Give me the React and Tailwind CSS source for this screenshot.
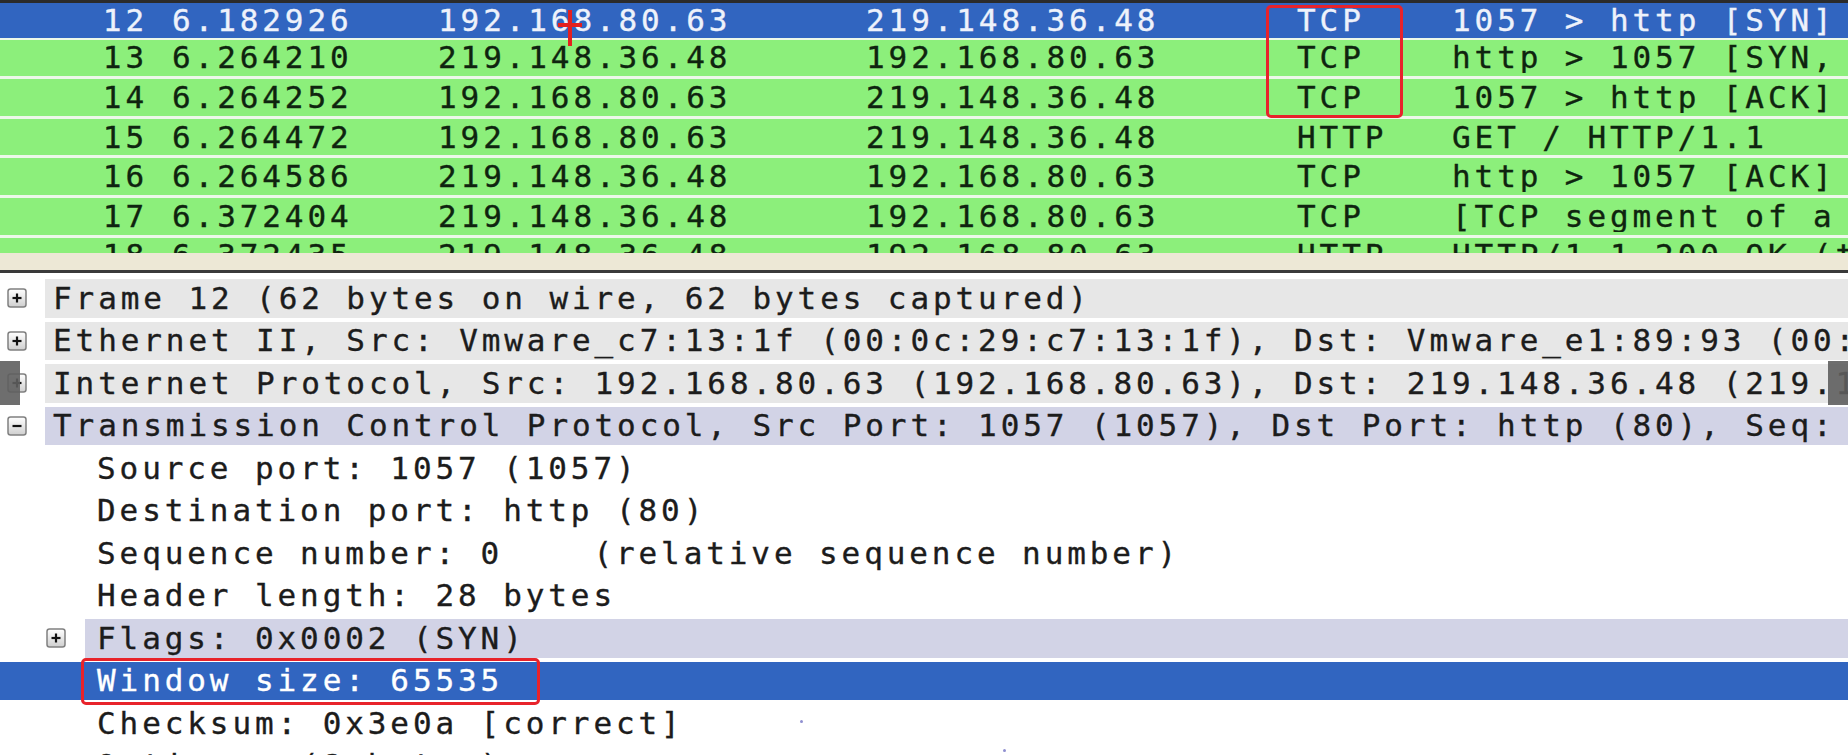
import React from "react";

const packets = [
  { no: "12", time: "6.182926", src: "192.168.80.63", dst: "219.148.36.48", proto: "TCP", info: "1057 > http [SYN] Seq=0 Win=65535 Len=0 MSS=1460", sel: true },
  { no: "13", time: "6.264210", src: "219.148.36.48", dst: "192.168.80.63", proto: "TCP", info: "http > 1057 [SYN, ACK] Seq=0 Ack=1 Win=5840 Len=0" },
  { no: "14", time: "6.264252", src: "192.168.80.63", dst: "219.148.36.48", proto: "TCP", info: "1057 > http [ACK] Seq=1 Ack=1 Win=65535 Len=0" },
  { no: "15", time: "6.264472", src: "192.168.80.63", dst: "219.148.36.48", proto: "HTTP", info: "GET / HTTP/1.1" },
  { no: "16", time: "6.264586", src: "219.148.36.48", dst: "192.168.80.63", proto: "TCP", info: "http > 1057 [ACK] Seq=1 Ack=489 Win=6432 Len=0" },
  { no: "17", time: "6.372404", src: "219.148.36.48", dst: "192.168.80.63", proto: "TCP", info: "[TCP segment of a reassembled PDU]" },
  { no: "18", time: "6.372435", src: "219.148.36.48", dst: "192.168.80.63", proto: "HTTP", info: "HTTP/1.1 200 OK (text/html)" },
];

const details = [
  { lvl: 0, exp: "+", tone: "gray", text: "Frame 12 (62 bytes on wire, 62 bytes captured)" },
  { lvl: 0, exp: "+", tone: "gray", text: "Ethernet II, Src: Vmware_c7:13:1f (00:0c:29:c7:13:1f), Dst: Vmware_e1:89:93 (00:50:56:e1:89:93)" },
  { lvl: 0, exp: "+", tone: "gray", text: "Internet Protocol, Src: 192.168.80.63 (192.168.80.63), Dst: 219.148.36.48 (219.148.36.48)" },
  { lvl: 0, exp: "-", tone: "lav", text: "Transmission Control Protocol, Src Port: 1057 (1057), Dst Port: http (80), Seq: 0, Len: 0" },
  { lvl: 1, text: "Source port: 1057 (1057)" },
  { lvl: 1, text: "Destination port: http (80)" },
  { lvl: 1, text: "Sequence number: 0    (relative sequence number)" },
  { lvl: 1, text: "Header length: 28 bytes" },
  { lvl: 1, exp: "+", tone: "lav", text: "Flags: 0x0002 (SYN)" },
  { lvl: 1, tone: "sel", text: "Window size: 65535", boxed: true },
  { lvl: 1, text: "Checksum: 0x3e0a [correct]" },
  { lvl: 1, exp: "+", text: "Options: (8 bytes)" },
];

function Expander({ sign }) {
  return (
    <svg width="20" height="20" viewBox="0 0 20 20" className="shrink-0">
      <defs>
        <linearGradient id="expg" x1="0" y1="0" x2="0" y2="1">
          <stop offset="0" stopColor="#ffffff" />
          <stop offset="1" stopColor="#cfcfcf" />
        </linearGradient>
      </defs>
      <rect x="1" y="1" width="18" height="18" rx="2.5" fill="url(#expg)" stroke="#808080" strokeWidth="1.5" />
      <path d="M5.5 10h9" stroke="#111" strokeWidth="2.2" />
      {sign === "+" && <path d="M10 5.5v9" stroke="#111" strokeWidth="2.2" />}
    </svg>
  );
}

function PacketRow({ p, first }) {
  const bg = p.sel ? "bg-[#3165c0] text-[#eef2fb]" : "bg-[#8cef7b] text-[#0f240f]";
  return (
    <div className={(first ? "h-[36.6px] border-b-[2.6px] " : "h-[39.6px] border-b-[3.6px] ") + "border-[#edf8e9] shrink-0"}>
      <div className={"grid grid-cols-[148px_290px_428px_431px_155px_1fr] items-center h-full whitespace-nowrap overflow-hidden " + bg}>
        <div className="text-right">{p.no}</div>
        <div className="pl-[24px]">{p.time}</div>
        <div>{p.src}</div>
        <div>{p.dst}</div>
        <div>{p.proto}</div>
        <div className="overflow-hidden">{p.info}</div>
      </div>
    </div>
  );
}

function DetailRow({ d }) {
  const band =
    d.tone === "gray" ? "bg-[#e7e7e7]" : d.tone === "lav" ? "bg-[#d2d3e6]" : "";
  const sel = d.tone === "sel";
  return (
    <div className="h-[42.5px] py-[2px] shrink-0">
      <div className={"relative flex h-full items-stretch " + (sel ? "bg-[#3165c0] text-white" : "text-[#1c1c1c]")}>
        {d.lvl === 0 ? (
          <div className="w-[45px] shrink-0 flex items-center pl-[7px]">
            <Expander sign={d.exp} />
          </div>
        ) : (
          <div className="w-[85px] shrink-0 flex items-center pl-[46px]">
            {d.exp && <Expander sign={d.exp} />}
          </div>
        )}
        <div className={"flex-1 flex items-center whitespace-pre overflow-hidden " + band + (d.lvl === 0 ? " pl-[8px]" : " pl-[12px]")}>
          {d.text}
        </div>
        {d.boxed && (
          <div className="absolute left-[81px] top-[-3.5px] w-[459px] h-[47px] border-[3px] border-[#e8232b] rounded-[5px]" />
        )}
      </div>
    </div>
  );
}

export default function App() {
  return (
    <div className="relative w-[1848px] h-[755px] overflow-hidden bg-white font-['DejaVu_Sans_Mono','Liberation_Mono',monospace] text-[31px] tracking-[3.9px] leading-none [-webkit-text-stroke:0.35px]">
      <div className="h-[3px] bg-[#2b2b2b]" />
      <div className="h-[250px] overflow-hidden flex flex-col bg-[#edf8e9]">
        {packets.map((p, i) => (
          <PacketRow key={p.no} p={p} first={i === 0} />
        ))}
      </div>
      <div className="h-[17px] bg-[#ede8d6]" />
      <div className="h-[3px] bg-[#3a3a3a]" />
      <div className="h-[482px] overflow-hidden flex flex-col pt-[4px] bg-white">
        {details.map((d, i) => (
          <DetailRow key={i} d={d} />
        ))}
      </div>

      {/* red highlight around protocol column */}
      <div className="absolute left-[1266px] top-[5px] w-[137px] h-[113px] border-[3px] border-[#e8232b] rounded-[5px]" />

      {/* mouse cursor */}
      <svg className="absolute left-[556px] top-[10px]" width="28" height="36" viewBox="0 0 28 36">
        <path d="M14 0v36M2 15h24" stroke="#e3201f" strokeWidth="4" />
      </svg>

      {/* video overlay blocks on the edges */}
      <div className="absolute left-0 top-[361px] w-[20px] h-[44px] bg-[#5e5e5e]/90" />
      <div className="absolute right-0 top-[361px] w-[20px] h-[44px] bg-[#5e5e5e]/90" />

      {/* specks */}
      <div className="absolute left-[800px] top-[720px] w-[3px] h-[3px] rounded-full bg-[#8f8fd0]" />
      <div className="absolute left-[1003px] top-[749px] w-[3px] h-[3px] rounded-full bg-[#8f8fd0]" />
    </div>
  );
}
